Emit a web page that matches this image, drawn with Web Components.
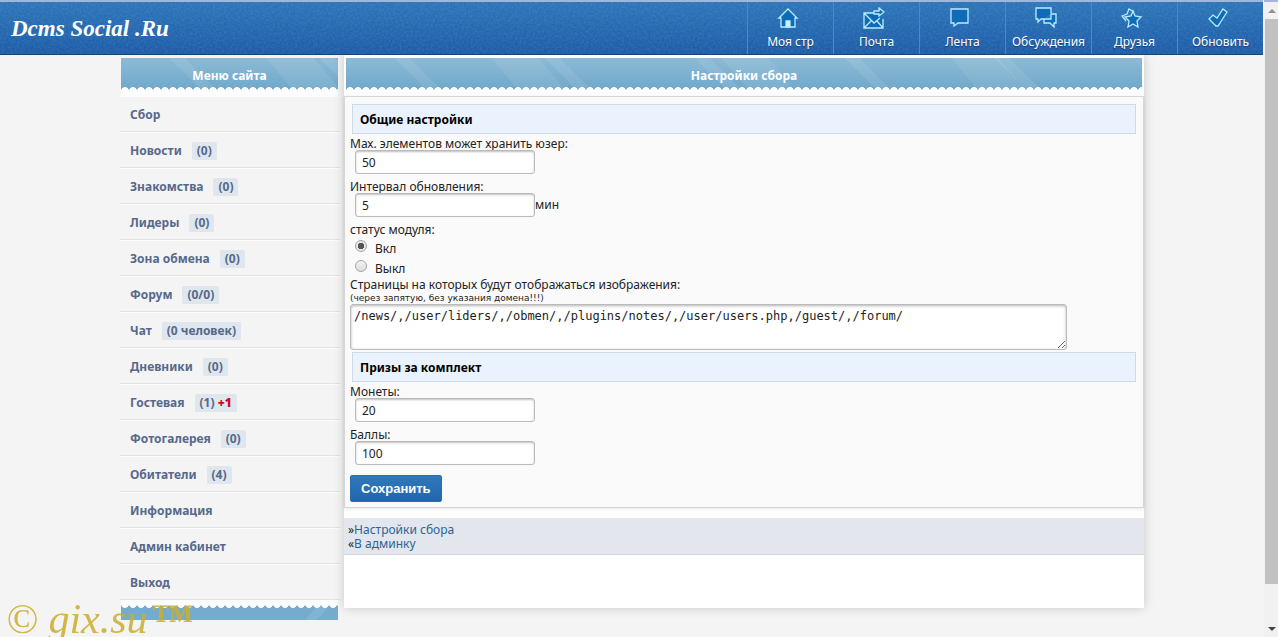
<!DOCTYPE html>
<html lang="ru">
<head>
<meta charset="utf-8">
<title>Настройки сбора</title>
<style>
  body { margin: 0; background: #f4f4f4; color: #222; font: 12px/14px "Noto Sans", "Open Sans", sans-serif; }
</style>
</head>
<body>
<site-page>
  <site-header slot="header">
    <nav-item icon="home">Моя стр</nav-item>
    <nav-item icon="mail">Почта</nav-item>
    <nav-item icon="feed">Лента</nav-item>
    <nav-item icon="talk">Обсуждения</nav-item>
    <nav-item icon="star">Друзья</nav-item>
    <nav-item icon="check">Обновить</nav-item>
  </site-header>
  <side-menu slot="menu">
    <menu-item>Сбор</menu-item>
    <menu-item count="(0)">Новости</menu-item>
    <menu-item count="(0)">Знакомства</menu-item>
    <menu-item count="(0)">Лидеры</menu-item>
    <menu-item count="(0)">Зона обмена</menu-item>
    <menu-item count="(0/0)">Форум</menu-item>
    <menu-item count="(0 человек)">Чат</menu-item>
    <menu-item count="(0)">Дневники</menu-item>
    <menu-item count="(1)" fresh="+1">Гостевая</menu-item>
    <menu-item count="(0)">Фотогалерея</menu-item>
    <menu-item count="(4)">Обитатели</menu-item>
    <menu-item>Информация</menu-item>
    <menu-item>Админ кабинет</menu-item>
    <menu-item>Выход</menu-item>
  </side-menu>
  <main-panel>
    <lace-head slot="head">Настройки сбора</lace-head>
    <settings-form></settings-form>
    <page-links slot="links"></page-links>
  </main-panel>
</site-page>
<water-mark></water-mark>

<script>
const define = (name, html, setup) => {
  const tpl = document.createElement('template');
  tpl.innerHTML = html;
  customElements.define(name, class extends HTMLElement {
    constructor() {
      super();
      this.attachShadow({ mode: 'open' }).append(tpl.content.cloneNode(true));
    }
    connectedCallback() { if (setup) setup(this, this.shadowRoot); }
  });
};

define('site-page', `
<style>
  :host { display: flex; min-height: 100vh; }
  .page { flex: 1; min-width: 0; height: 100vh; overflow: hidden; }
  .cols { display: grid; grid-template-columns: 220px minmax(0, 800px); gap: 4px; justify-content: center; align-items: start; }
</style>
<div class="page">
  <slot name="header"></slot>
  <div class="cols"><slot name="menu"></slot><slot></slot></div>
</div>
<scroll-rail></scroll-rail>`);

define('scroll-rail', `
<style>
  :host { display: flex; flex-direction: column; box-sizing: border-box; width: 14px; height: 100vh; padding-left: 1px; background: #f1f1f1; border-top: 2px solid #a3b3dd; }
  .arrow { height: 17px; display: grid; place-items: center; }
  .thumb { flex: 565; background: #c1c1c1; }
  .rest { flex: 36; }
  svg { display: block; }
</style>
<div class="arrow"><svg width="8" height="4"><path d="M4 0L8 4H0z" fill="#8f8f8f"/></svg></div>
<div class="thumb"></div><div class="rest"></div>
<div class="arrow"><svg width="8" height="4"><path d="M0 0H8L4 4z" fill="#444"/></svg></div>`);

define('site-header', `
<style>
  :host { display: flex; justify-content: space-between; align-items: stretch; box-sizing: border-box; height: 55px; margin-right: 1px;
    border-top: 2px solid #9fb6dd; border-bottom: 1px solid #17437c; position: relative;
    background: linear-gradient(#2c76b8, #1c5ca9); }
  .grain { position: absolute; inset: 0; width: 100%; height: 100%; opacity: .1; }
  a { position: relative; padding-left: 11px; font: italic bold 23px/54px "Liberation Serif", serif; color: #fff; text-decoration: none; }
  nav { position: relative; display: flex; }
</style>
<svg class="grain" aria-hidden="true"><filter id="n"><feTurbulence type="fractalNoise" baseFrequency=".45" numOctaves="2"/><feColorMatrix values="0 0 0 0 1  0 0 0 0 1  0 0 0 0 1  1.6 0 0 0 -.5"/></filter><rect width="100%" height="100%" filter="url(#n)"/></svg>
<a href="#">Dcms Social .Ru</a>
<nav><slot></slot></nav>`);

const icons = {
  home: '<path d="M2 11L11 2l9 9h-2v9H4v-9z"/><path d="M9 20v-6h4v6z" fill="#cdf4ff"/>',
  mail: '<path d="M11 6H1v15h19v-9M1 21l7-7M20 21l-6-7M1 6l10 10 6-5"/><path d="M11 4h5V1l5 4-5 4V7h-5z"/>',
  feed: '<path d="M2 2h17v14H9l-4 3v-3H2z"/>',
  talk: '<path d="M9 12H6l-3 3v-3H1V1h15v5"/><path d="M16 7h5v9h-2v4l-4-4H9v-4h7z"/>',
  star: '<path d="M5 14L1 9l5-2 2-5 5 3" fill="none"/><path d="M12 4l2 5 6 1-4 4 1 6-5-3-5 3 1-6-4-4 6-1z"/>',
  check: '<path d="M2 12l4-4 4 3 6-9 4 3-9 14-2 0z"/>'
};
define('nav-item', `
<style>
  :host { display: block; width: 86px; }
  a { box-sizing: border-box; height: 100%; display: flex; flex-direction: column; align-items: center; gap: 6px; padding-top: 5px;
    border-left: 1px solid #4a8ac8; color: #fff; text-decoration: none; font: 12px/14px "Noto Sans", sans-serif; text-shadow: 0 1px 1px #123f78; }
  svg { display: block; margin-right: 6px; fill: #0f6ab8; stroke: #b9ecff; stroke-width: 1.3; }
</style>
<a href="#"><svg width="22" height="22" viewBox="0 0 22 22" aria-hidden="true"></svg><span><slot></slot></span></a>`,
(el, root) => { root.querySelector('svg').innerHTML = icons[el.getAttribute('icon')]; });

define('lace-head', `
<style>
  :host { display: block; height: 38px; overflow: hidden;
    background:
      radial-gradient(circle at 4px 4px, #fbfdfe 3.6px, transparent 4.2px) 0 29px / 8px 8px repeat-x,
      linear-gradient(#fbfcfd, #fbfcfd) 0 33px / 100% 5px no-repeat,
      linear-gradient(45deg, transparent 46%, rgba(255,255,255,.08) 46% 54%, transparent 54%) 0 0 / 150px 38px,
      linear-gradient(50deg, transparent 60%, rgba(255,255,255,.07) 60% 78%, transparent 78%) 20px 0 / 230px 38px,
      linear-gradient(#8cbad5, #6ea6ca 34px); }
  h2 { margin: 0; text-align: center; color: #fff; font: bold 12px/36px "Comic Sans MS", "Noto Sans", sans-serif; }
</style>
<h2><slot></slot></h2>`);

define('side-menu', `
<style>
  :host { display: block; padding-top: 3px; }
  lace-head { margin: 0 2px 0 1px; }
  .foot { height: 20px; margin: 0 2px 0 1px;
    background:
      radial-gradient(circle at 4px 4px, #fbfdfe 3.6px, transparent 4.2px) 0 0 / 8px 8px repeat-x,
      linear-gradient(#fbfcfd, #fbfcfd) 0 0 / 100% 4px no-repeat,
      linear-gradient(130deg, transparent 86%, rgba(255,255,255,.1) 86% 91%, transparent 91%),
      #75abcc; }
</style>
<lace-head>Меню сайта</lace-head>
<nav><slot></slot></nav>
<div class="foot"></div>`);

define('menu-item', `
<style>
  :host { display: block; }
  a { box-sizing: border-box; height: 36px; display: flex; align-items: center; gap: 10px; padding: 2px 0 0 10px;
    border-top: 1px solid #fbfbfb; border-bottom: 1px solid #e2e2e2; color: #56698a; text-decoration: none;
    font: bold 12px/18px "Noto Sans", sans-serif; }
  .count { padding: 0 5px; border-radius: 2px; background: #dfe6ee; }
  b { color: #c8102e; }
</style>
<a href="#"><span><slot></slot></span></a>`,
(el, root) => {
  if (!el.hasAttribute('count')) return;
  const span = document.createElement('span');
  span.className = 'count';
  span.textContent = el.getAttribute('count');
  if (el.hasAttribute('fresh')) {
    const b = document.createElement('b');
    b.textContent = el.getAttribute('fresh');
    span.append(' ', b);
  }
  root.querySelector('a').append(span);
});

define('main-panel', `
<style>
  :host { display: block; padding: 3px 0 53px; background: #fff; box-shadow: 0 0 10px rgba(0,0,0,.18); }
  .head { padding: 0 2px; }
  main { border: 1px solid #d6d6d6; background: #fafafa; padding: 7px 5px 5px; box-shadow: 0 1px 3px rgba(0,0,0,.1); }
  footer { margin-top: 10px; }
</style>
<div class="head"><slot name="head"></slot></div>
<main><slot></slot></main>
<footer><slot name="links"></slot></footer>`);

define('section-title', `
<style>
  :host { display: block; margin: 0 2px 2px; }
  h3 { margin: 0; padding: 1px 7px 0; border: 1px solid #cddae8; background: #eaf3fd; color: #000; font: bold 12px/27px "Noto Sans", sans-serif; }
</style>
<h3><slot></slot></h3>`);

define('text-field', `
<style>
  :host { display: block; margin-bottom: 5px; }
  label { display: block; padding-top: 2px; line-height: 12px; }
  .row { display: flex; align-items: center; padding-left: 5px; }
  input { box-sizing: border-box; width: 180px; height: 24px; padding: 0 6px; border: 1px solid #bbb; border-radius: 3px; background: #fff;
    box-shadow: inset 0 1px 2px rgba(0,0,0,.25); color: #222; font: 12px/14px "Noto Sans", sans-serif; }
</style>
<label for="f"></label>
<div class="row"><input id="f" type="text"><slot></slot></div>`,
(el, root) => {
  root.querySelector('label').textContent = el.getAttribute('label');
  root.querySelector('input').value = el.getAttribute('value');
});

define('settings-form', `
<style>
  :host { display: block; }
  form { margin: 0; }
  fieldset { margin: 0; padding: 0; border: 0; }
  legend { padding: 2px 0 0; line-height: 12px; }
  .choice { display: flex; align-items: center; gap: 8px; height: 20px; padding-left: 5px; }
  .choice label { padding-top: 5px; }
  .pages { display: block; padding-top: 2px; }
  input { appearance: none; box-sizing: border-box; width: 12px; height: 12px; margin: 0; border: 1px solid #a5a5a5; border-radius: 50%; background: linear-gradient(#f2f2f2, #ddd); }
  input:checked { background: radial-gradient(circle, #555 3px, #e6e6e6 3.5px); }
  small { display: block; font: 9px/12px "DejaVu Sans", sans-serif; }
  textarea { display: block; box-sizing: border-box; width: 91%; height: 46px; margin: 0 0 2px; padding: 4px 3px; border: 1px solid #bbb; border-radius: 3px;
    box-shadow: inset 0 1px 3px rgba(0,0,0,.3); background: #fff; color: #222; font: 12px/14px "DejaVu Sans Mono", monospace; }
  button { height: 27px; margin: 10px 0 0; padding: 0 10px; border: 1px solid #2f6cae; border-radius: 2px; background: linear-gradient(#3079ba, #2265ae);
    color: #fff; font: bold 13px/14px "Liberation Sans", sans-serif; display: block; }
</style>
<form onsubmit="return false">
  <section-title>Общие настройки</section-title>
  <text-field label="Мах. элементов может хранить юзер:" value="50"></text-field>
  <text-field label="Интервал обновления:" value="5">мин</text-field>
  <fieldset>
    <legend>статус модуля:</legend>
    <div class="choice"><input type="radio" name="s" id="on" checked><label for="on">Вкл</label></div>
    <div class="choice"><input type="radio" name="s" id="off"><label for="off">Выкл</label></div>
  </fieldset>
  <label class="pages" for="pages">Страницы на которых будут отображаться изображения:<small>(через запятую, без указания домена!!!)</small></label>
  <textarea id="pages">/news/,/user/liders/,/obmen/,/plugins/notes/,/user/users.php,/guest/,/forum/</textarea>
  <section-title>Призы за комплект</section-title>
  <text-field label="Монеты:" value="20"></text-field>
  <text-field label="Баллы:" value="100"></text-field>
  <button type="submit">Сохранить</button>
</form>`);

define('page-links', `
<style>
  :host { display: block; padding: 5px 4px 3px; background: #e3e6ec; border-bottom: 1px solid #d2d8e0; }
  div { display: flex; }
  a { color: #2a6496; text-decoration: none; }
</style>
<div><span>»</span><a href="#">Настройки сбора</a></div>
<div><span>«</span><a href="#">В админку</a></div>`);

define('water-mark', `
<style>
  :host { position: fixed; left: 6px; bottom: -6px; display: flex; gap: 4px; align-items: baseline; white-space: pre; pointer-events: none;
    color: rgba(204,174,48,.88); font: italic 42px/48px "Liberation Serif", serif; }
  .tm { font-style: normal; font-weight: bold; }
</style>
<span>© gix.su</span><span class="tm">™</span>`);
</script>
</body>
</html>
